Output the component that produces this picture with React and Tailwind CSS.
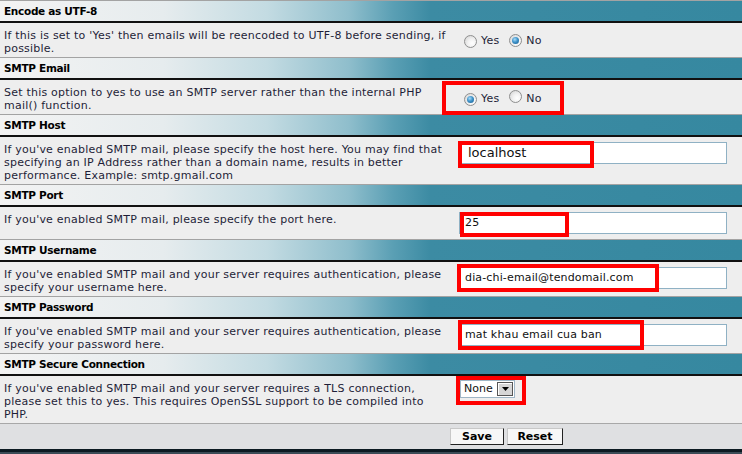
import React from "react";

const FONT = { fontFamily: '"DejaVu Sans", sans-serif' };

function Header({ children }) {
  return (
    <div className="col-span-2 h-[23px] border-t border-b-2 border-t-[#a3a3a3] border-b-[#111111] bg-[linear-gradient(to_right,#f3f3f3_0%,#e6ecee_22%,#c3dbe2_36%,#8fbecc_47%,#5a9fb4_53%,#3c8ba3_58%,#3688a0_100%)] pl-[4px] text-[10.5px] font-bold leading-[20px] tracking-[-0.3px] text-black">
      {children}
    </div>
  );
}

function Radio({ checked }) {
  return (
    <span className="inline-flex h-[13px] w-[13px] items-center justify-center rounded-full border border-[#8e8f8f] bg-[radial-gradient(circle_at_65%_65%,#ffffff_0%,#f2f2f2_40%,#cfcfcf_100%)]">
      {checked && (
        <span className="h-[7px] w-[7px] rounded-full bg-[radial-gradient(circle_at_40%_35%,#a8dcfa_0%,#3f93c9_45%,#14598d_100%)]" />
      )}
    </span>
  );
}

function RadioPair({ yes }) {
  return (
    <div className="flex items-center pl-[8px] pt-[10px] text-[11px] tracking-[0.2px] text-[#1e1e38]">
      <Radio checked={yes} />
      <span className="ml-[4px]">Yes</span>
      <span className="ml-[10px]"><Radio checked={!yes} /></span>
      <span className="ml-[4px]">No</span>
    </div>
  );
}

function TextInput({ value, big }) {
  return (
    <div className="pl-[3px] pt-[5px]">
      <div className={`flex h-[22px] w-[268px] items-center border border-[#8fb1c4] bg-white text-[#111] ${big ? "pl-[8px] text-[13px]" : "pl-[5px] text-[11px] tracking-[0.15px]"}`}>
        {value}
      </div>
    </div>
  );
}

function Desc({ lines }) {
  return (
    <div className="whitespace-nowrap px-[4px] pb-[2px] pt-[6px] text-[11px] leading-[13px] tracking-[0.22px] text-[#1e1e38]">
      {lines.map((l, i) => (
        <div key={i}>{l}</div>
      ))}
    </div>
  );
}

function Row({ lines, right }) {
  return (
    <>
      <div className="bg-[#eeeeee]">
        <Desc lines={lines} />
      </div>
      <div className="bg-[#eeeeee]">{right}</div>
    </>
  );
}

function RedBox({ className }) {
  return <div className={`pointer-events-none absolute border-4 border-[#ff0000] ${className}`} />;
}

export default function App() {
  return (
    <div className="relative h-[454px] w-[742px] overflow-hidden bg-[#eeeeee]" style={FONT}>
      <div className="grid grid-cols-[456px_1fr]">
        <Header>Encode as UTF-8</Header>
        <Row
          lines={[
            "If this is set to 'Yes' then emails will be reencoded to UTF-8 before sending, if",
            "possible.",
          ]}
          right={<RadioPair yes={false} />}
        />
        <Header>SMTP Email</Header>
        <Row
          lines={[
            "Set this option to yes to use an SMTP server rather than the internal PHP",
            "mail() function.",
          ]}
          right={<RadioPair yes={true} />}
        />
        <Header>SMTP Host</Header>
        <Row
          lines={[
            "If you've enabled SMTP mail, please specify the host here. You may find that",
            "specifying an IP Address rather than a domain name, results in better",
            "performance. Example: smtp.gmail.com",
          ]}
          right={<TextInput value="localhost" big />}
        />
        <Header>SMTP Port</Header>
        <Row
          lines={["If you've enabled SMTP mail, please specify the port here."]}
          right={
            <div className="pb-[5px]">
              <TextInput value="25" />
            </div>
          }
        />
        <Header>SMTP Username</Header>
        <Row
          lines={[
            "If you've enabled SMTP mail and your server requires authentication, please",
            "specify your username here.",
          ]}
          right={<TextInput value="dia-chi-email@tendomail.com" />}
        />
        <Header>SMTP Password</Header>
        <Row
          lines={[
            "If you've enabled SMTP mail and your server requires authentication, please",
            "specify your password here.",
          ]}
          right={<TextInput value="mat khau email cua ban" />}
        />
        <Header>SMTP Secure Connection</Header>
        <Row
          lines={[
            "If you've enabled SMTP mail and your server requires a TLS connection,",
            "please set this to yes. This requires OpenSSL support to be compiled into",
            "PHP.",
          ]}
          right={
            <div className="pl-[4px] pt-[4px]">
              <div className="flex h-[18px] w-[55px] items-center justify-between border border-[#9fb6c6] bg-white pl-[3px] text-[11px] text-[#111]">
                <span>None</span>
                <span className="mr-[1px] flex h-[14px] w-[16px] items-center justify-center border border-[#555] bg-[#d6d6d6] shadow-[inset_1px_1px_0_#ffffff]">
                  <svg width="7" height="4" viewBox="0 0 7 4">
                    <path d="M0 0 H7 L3.5 4 Z" fill="#000" />
                  </svg>
                </span>
              </div>
            </div>
          }
        />
        <div className="col-span-2 flex h-[26px] items-center gap-[3px] border-t border-[#a8a8a8] bg-[#dfe0e2] pl-[450px]">
          <button className="h-[17px] w-[54px] border border-t-[#c8c8c8] border-l-[#c8c8c8] border-b-[#222] border-r-[#222] bg-[#f7f7f7] text-[11px] font-bold leading-[14px] text-black">
            Save
          </button>
          <button className="h-[17px] w-[56px] border border-t-[#c8c8c8] border-l-[#c8c8c8] border-b-[#222] border-r-[#222] bg-[#f7f7f7] text-[11px] font-bold leading-[14px] text-black">
            Reset
          </button>
        </div>
        <div className="col-span-2 h-[3px] bg-[#0c1a22]" />
        <div className="col-span-2 h-[6px] bg-[#3b4b56]" />
      </div>

      <RedBox className="left-[442px] top-[81px] h-[34px] w-[122px]" />
      <RedBox className="left-[458px] top-[141px] h-[27px] w-[136px]" />
      <RedBox className="left-[460px] top-[212px] h-[25px] w-[109px]" />
      <RedBox className="left-[457px] top-[264px] h-[28px] w-[202px]" />
      <RedBox className="left-[458px] top-[320px] h-[30px] w-[186px]" />
      <RedBox className="left-[456px] top-[376px] h-[29px] w-[70px]" />
    </div>
  );
}
